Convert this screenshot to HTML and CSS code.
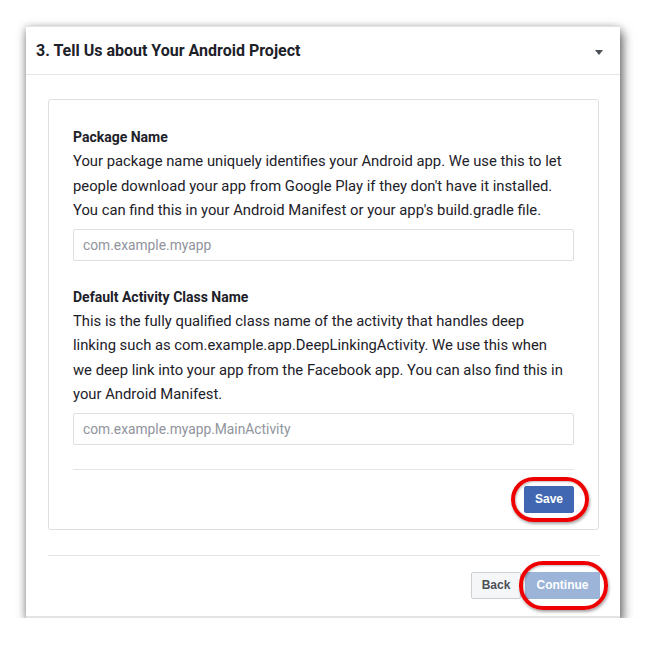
FILE: index.html
```html
<!DOCTYPE html>
<html>
<head>
<meta charset="utf-8">
<link rel="stylesheet" href="styles.css">
</head>
<body>
<div class="card">
  <div class="card-header">
    <span class="title">3. Tell Us about Your Android Project</span>
    <span class="caret"></span>
  </div>
  <div class="card-body">
    <div class="panel">
      <div class="field">
        <div class="label">Package Name</div>
        <div class="desc">Your package name uniquely identifies your Android app. We use this to let people download your app from Google Play if they don't have it installed. You can find this in your Android Manifest or your app's build.gradle file.</div>
        <input class="input" type="text" placeholder="com.example.myapp">
      </div>
      <div class="field">
        <div class="label">Default Activity Class Name</div>
        <div class="desc">This is the fully qualified class name of the activity that handles deep linking such as com.example.app.DeepLinkingActivity. We use this when we deep link into your app from the Facebook app. You can also find this in your Android Manifest.</div>
        <input class="input" type="text" placeholder="com.example.myapp.MainActivity">
      </div>
      <div class="panel-footer">
        <span class="btn-wrap">
          <button class="btn btn-primary">Save</button>
          <span class="ring ring-save"></span>
        </span>
      </div>
    </div>
  </div>
  <div class="card-footer">
    <button class="btn btn-default">Back</button>
    <span class="btn-wrap">
      <button class="btn btn-disabled">Continue</button>
      <span class="ring ring-continue"></span>
    </span>
  </div>
</div>
</body>
</html>
```

FILE: styles.css
```css
html, body {
  margin: 0;
  padding: 0;
  background: #ffffff;
}
body {
  padding: 26px 25px 0 26px;
  font-family: Roboto, "Liberation Sans", Arial, sans-serif;
  color: #1d2129;
}
.card {
  width: 594px;
  box-sizing: border-box;
  background: #ffffff;
  border-top: 1px solid #e3e3e3;
  border-bottom: 2px solid #e3e4e6;
  box-shadow: 3px 6px 10px rgba(0, 0, 0, 0.55), -1px 1px 8px rgba(0, 0, 0, 0.25);
}
.card-header {
  height: 48px;
  box-sizing: border-box;
  border-bottom: 1px solid #e5e5e5;
  display: flex;
  align-items: center;
  justify-content: space-between;
  padding: 0 17px 0 10px;
}
.title {
  font-size: 16px;
  font-weight: 700;
  color: #1d2129;
}
.caret {
  width: 0;
  height: 0;
  border-left: 4px solid transparent;
  border-right: 4px solid transparent;
  border-top: 5px solid #4b4f56;
  margin-top: 3px;
}
.card-body {
  padding: 24px 21px 0 22px;
}
.panel {
  border: 1px solid #dddfe2;
  border-radius: 3px;
  padding: 25px 24px 16px 24px;
}
.field {
  margin-bottom: 24px;
}
.label {
  font-size: 14px;
  font-weight: 700;
  line-height: 24px;
  color: #1d2129;
}
.desc {
  max-width: 496px;
  font-size: 14.8px;
  line-height: 24.5px;
  color: #1d2129;
  margin-bottom: 6px;
}
.input {
  display: block;
  width: 100%;
  height: 32px;
  box-sizing: border-box;
  border: 1px solid #dddfe2;
  border-radius: 2px;
  padding: 0 9px;
  font-family: Roboto, "Liberation Sans", Arial, sans-serif;
  font-size: 13.8px;
  color: #1d2129;
  outline: none;
}
.input::placeholder {
  color: #90949c;
}
.panel-footer {
  border-top: 1px solid #e5e5e5;
  padding-top: 16px;
  display: flex;
  justify-content: flex-end;
}
.card-footer {
  margin: 25px 20px 0 22px;
  border-top: 1px solid #e5e5e5;
  padding: 16px 0 17px 0;
  display: flex;
  justify-content: flex-end;
  gap: 4px;
}
.btn-wrap {
  position: relative;
  display: inline-block;
}
.btn {
  display: block;
  height: 27px;
  box-sizing: border-box;
  border: 1px solid transparent;
  border-radius: 2px;
  font-family: "Liberation Sans", Arial, sans-serif;
  font-size: 12px;
  font-weight: 700;
  padding: 0;
  margin: 0;
}
.btn-primary {
  width: 50px;
  background: #4267b2;
  border-color: #4267b2;
  color: #ffffff;
}
.btn-default {
  width: 50px;
  background: #f5f6f7;
  border-color: #ccd0d5;
  color: #4b4f56;
}
.btn-disabled {
  width: 75px;
  background: #9cb4d8;
  border-color: #9cb4d8;
  color: #ffffff;
}
.ring {
  position: absolute;
  box-sizing: border-box;
  border: 4px solid #ee0000;
  border-radius: 24px;
  box-shadow: 1px 2px 3px rgba(0, 0, 0, 0.35), inset 1px 1px 2px rgba(0, 0, 0, 0.25);
  pointer-events: none;
}
.ring-save {
  left: -13px;
  top: -9px;
  width: 78px;
  height: 45px;
}
.ring-continue {
  left: -6px;
  top: -11px;
  width: 89px;
  height: 49px;
}
```
